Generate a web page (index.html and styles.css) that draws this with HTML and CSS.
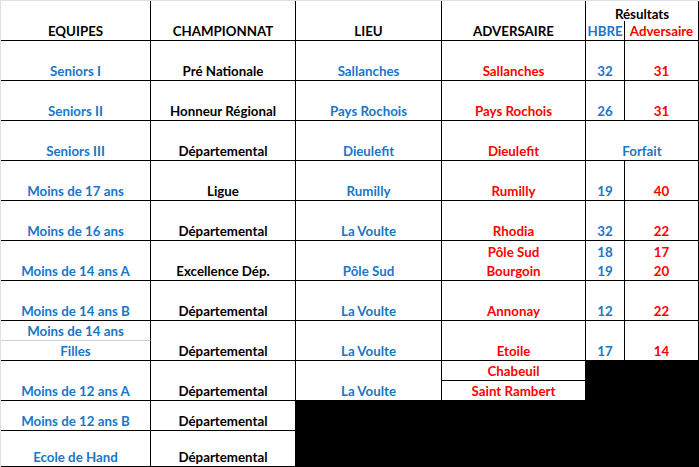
FILE: index.html
```html
<!DOCTYPE html>
<html lang="fr">
<head>
<meta charset="utf-8">
<title>Résultats</title>
<link rel="stylesheet" href="styles.css">
</head>
<body>
<div class="sheet">
  <div class="c h2">EQUIPES</div>
  <div class="c h2">CHAMPIONNAT</div>
  <div class="c h2">LIEU</div>
  <div class="c h2">ADVERSAIRE</div>
  <div class="c span2 nb top">Résultats</div>
  <div class="c b">HBRE</div>
  <div class="c r">Adversaire</div>

  <div class="c h2 b">Seniors I</div>
  <div class="c h2">Pré Nationale</div>
  <div class="c h2 b">Sallanches</div>
  <div class="c h2 r">Sallanches</div>
  <div class="c h2 b">32</div>
  <div class="c h2 r">31</div>

  <div class="c h2 b">Seniors II</div>
  <div class="c h2">Honneur Régional</div>
  <div class="c h2 b">Pays Rochois</div>
  <div class="c h2 r">Pays Rochois</div>
  <div class="c h2 b">26</div>
  <div class="c h2 r">31</div>

  <div class="c h2 b">Seniors III</div>
  <div class="c h2">Départemental</div>
  <div class="c h2 b">Dieulefit</div>
  <div class="c h2 r">Dieulefit</div>
  <div class="c h2 span2 b">Forfait</div>

  <div class="c h2 b">Moins de 17 ans</div>
  <div class="c h2">Ligue</div>
  <div class="c h2 b">Rumilly</div>
  <div class="c h2 r">Rumilly</div>
  <div class="c h2 b">19</div>
  <div class="c h2 r">40</div>

  <div class="c h2 b">Moins de 16 ans</div>
  <div class="c h2">Départemental</div>
  <div class="c h2 b">La Voulte</div>
  <div class="c h2 r">Rhodia</div>
  <div class="c h2 b">32</div>
  <div class="c h2 r">22</div>

  <div class="c h2 b">Moins de 14 ans A</div>
  <div class="c h2">Excellence Dép.</div>
  <div class="c h2 b">Pôle Sud</div>
  <div class="c nb r">Pôle Sud</div>
  <div class="c nb b">18</div>
  <div class="c nb r">17</div>
  <div class="c r">Bourgoin</div>
  <div class="c b">19</div>
  <div class="c r">20</div>

  <div class="c h2 b">Moins de 14 ans B</div>
  <div class="c h2">Départemental</div>
  <div class="c h2 b">La Voulte</div>
  <div class="c h2 r">Annonay</div>
  <div class="c h2 b">12</div>
  <div class="c h2 r">22</div>

  <div class="c gb b">Moins de 14 ans</div>
  <div class="c h2">Départemental</div>
  <div class="c h2 b">La Voulte</div>
  <div class="c h2 r">Etoile</div>
  <div class="c h2 b">17</div>
  <div class="c h2 r">14</div>
  <div class="c b">Filles</div>

  <div class="c h2 b">Moins de 12 ans A</div>
  <div class="c h2">Départemental</div>
  <div class="c h2 b">La Voulte</div>
  <div class="c r">Chabeuil</div>
  <div class="blk blk-a"></div>
  <div class="c r">Saint Rambert</div>

  <div class="c b">Moins de 12 ans B</div>
  <div class="c">Départemental</div>
  <div class="blk blk-b"></div>
  <div class="c b">Ecole de Hand</div>
  <div class="c">Départemental</div>
</div>
</body>
</html>
```

FILE: styles.css
```css
html, body {
  margin: 0;
  padding: 0;
  background: #ffffff;
}

body {
  font-family: Lato, "Open Sans", sans-serif;
  font-weight: 700;
  font-size: 13.3px;
  color: #000000;
  overflow: hidden;
}

.sheet {
  width: 698px;
  height: 467px;
  box-sizing: border-box;
  border-top: 1px solid #dbe0e9;
  border-left: 1px solid #dbe0e9;
  display: grid;
  grid-template-columns: 150px 145px 146px 144px 39px 74px;
  grid-template-rows: 20px 20px repeat(18, 20px) 30px 36px;
}

.c {
  display: flex;
  align-items: flex-end;
  justify-content: center;
  border-right: 1px solid #000;
  border-bottom: 1px solid #000;
  line-height: 18px;
  white-space: nowrap;
  min-width: 0;
}

.h2 { grid-row: span 2; }
.span2 { grid-column: span 2; }
.nb { border-bottom: none; }
.gb { border-bottom: 1px solid #c9d0dc; }
.top { line-height: 14px; }

.b { color: #1a76c6; }
.r { color: #ff0000; }

.blk {
  background: #000;
  margin-right: -1px;
}
.blk-a { grid-column: span 2; grid-row: span 2; }
.blk-b { grid-column: span 4; grid-row: span 2; }
```
